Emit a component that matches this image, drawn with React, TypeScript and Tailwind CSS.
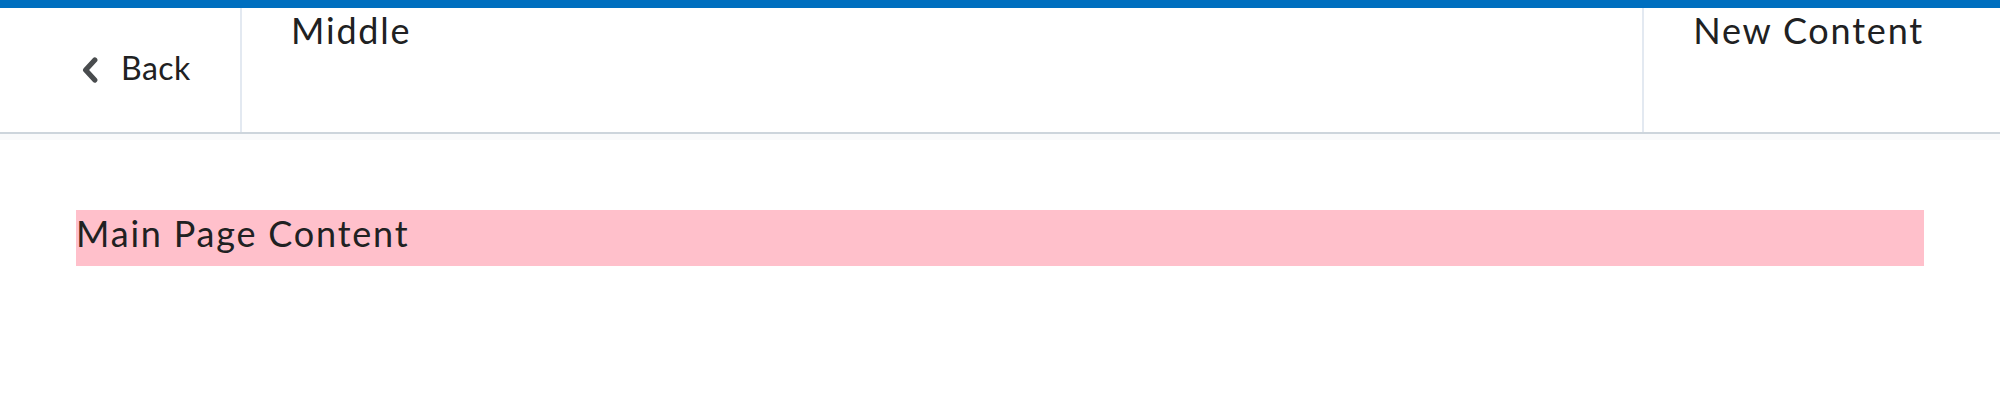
import { ReactNode } from 'react';

const font = { fontFamily: 'Lato, "Noto Sans", sans-serif' };

const BackChevron = () => (
  <svg width="16" height="26" viewBox="0 0 16 26" aria-hidden="true" className="shrink-0">
    <polyline
      points="12.8,3 3.6,13 12.8,23"
      fill="none"
      stroke="#494c4e"
      strokeWidth="5.2"
      strokeLinecap="round"
      strokeLinejoin="round"
    />
  </svg>
);

const Section = ({ children, className }: { children: ReactNode; className: string }) => (
  <div className={className}>{children}</div>
);

const App = () => {
  return (
    <div className="min-h-[400px] bg-white text-[#202122]" style={font}>
      {/* Top accent bar */}
      <div className="h-[8px] bg-[#006fbf]" />

      {/* Immersive navigation header */}
      <header className="flex h-[126px] border-b-2 border-[#cdd5dc] bg-white pr-[76px] shadow-[0_6px_0_0_#f9fafb]">
        <Section className="flex w-[242px] shrink-0 items-center border-r-2 border-[#e3e9f1] pl-[82px]">
          <a href="#" className="flex items-center">
            <BackChevron />
            <span className="mb-[5px] ml-[23px] text-[32px] leading-[32px] tracking-[0.5px]">Back</span>
          </a>
        </Section>
        <Section className="flex-1 pl-[49px]">
          <span className="text-[36px] leading-[normal] tracking-[1.8px]">Middle</span>
        </Section>
        <Section className="border-l-2 border-[#e3e9f1] pl-[49px]">
          <span className="text-[36px] leading-[normal] tracking-[1.8px] whitespace-nowrap">New Content</span>
        </Section>
      </header>

      {/* Page body */}
      <main className="px-[76px] pt-[76px]">
        <div className="h-[56px] bg-[#ffc0cb] pt-[1px] text-[36px] leading-[normal] tracking-[1.8px]">
          Main Page Content
        </div>
      </main>
    </div>
  );
};

export default App;
